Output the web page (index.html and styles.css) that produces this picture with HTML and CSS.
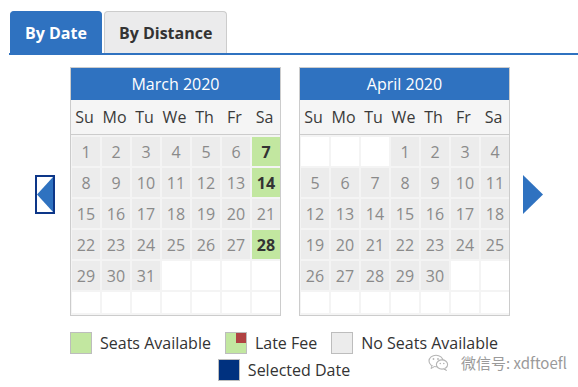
FILE: index.html
```html
<!DOCTYPE html>
<html lang="en">
<head>
    <meta charset="UTF-8">
    <meta name="viewport" content="width=device-width, initial-scale=1.0">
    <title>Test Dates</title>
    <link rel="stylesheet" href="styles.css">
</head>
<body>
    <!-- Tabs -->
    <div class="tabs">
        <div class="tab active">By Date</div>
        <div class="tab">By Distance</div>
    </div>

    <!-- Calendars -->
    <div class="cal-row">
        <div class="arrow prev">
            <svg width="20" height="39" viewBox="0 0 20 39">
                <rect x="1" y="1" width="18" height="37" fill="#fff" stroke="#0d3688" stroke-width="2"/>
                <polygon points="2,19.5 18,2 18,37" fill="#2f72c0"/>
            </svg>
        </div>

        <div class="cal">
            <div class="cal-head">March 2020</div>
            <div class="cal-dow">
                <span>Su</span><span>Mo</span><span>Tu</span><span>We</span><span>Th</span><span>Fr</span><span>Sa</span>
            </div>
            <div class="cal-grid">
                <span class="day">1</span><span class="day">2</span><span class="day">3</span><span class="day">4</span><span class="day">5</span><span class="day">6</span><span class="day open">7</span>
                <span class="day">8</span><span class="day">9</span><span class="day">10</span><span class="day">11</span><span class="day">12</span><span class="day">13</span><span class="day open">14</span>
                <span class="day">15</span><span class="day">16</span><span class="day">17</span><span class="day">18</span><span class="day">19</span><span class="day">20</span><span class="day">21</span>
                <span class="day">22</span><span class="day">23</span><span class="day">24</span><span class="day">25</span><span class="day">26</span><span class="day">27</span><span class="day open">28</span>
                <span class="day">29</span><span class="day">30</span><span class="day">31</span><span class="empty"></span><span class="empty"></span><span class="empty"></span><span class="empty"></span>
                <span class="empty"></span><span class="empty"></span><span class="empty"></span><span class="empty"></span><span class="empty"></span><span class="empty"></span><span class="empty"></span>
            </div>
        </div>

        <div class="cal">
            <div class="cal-head">April 2020</div>
            <div class="cal-dow">
                <span>Su</span><span>Mo</span><span>Tu</span><span>We</span><span>Th</span><span>Fr</span><span>Sa</span>
            </div>
            <div class="cal-grid">
                <span class="empty"></span><span class="empty"></span><span class="empty"></span><span class="day">1</span><span class="day">2</span><span class="day">3</span><span class="day">4</span>
                <span class="day">5</span><span class="day">6</span><span class="day">7</span><span class="day">8</span><span class="day">9</span><span class="day">10</span><span class="day">11</span>
                <span class="day">12</span><span class="day">13</span><span class="day">14</span><span class="day">15</span><span class="day">16</span><span class="day">17</span><span class="day">18</span>
                <span class="day">19</span><span class="day">20</span><span class="day">21</span><span class="day">22</span><span class="day">23</span><span class="day">24</span><span class="day">25</span>
                <span class="day">26</span><span class="day">27</span><span class="day">28</span><span class="day">29</span><span class="day">30</span><span class="empty"></span><span class="empty"></span>
                <span class="empty"></span><span class="empty"></span><span class="empty"></span><span class="empty"></span><span class="empty"></span><span class="empty"></span><span class="empty"></span>
            </div>
        </div>

        <div class="arrow next">
            <svg width="20" height="39" viewBox="0 0 20 39">
                <polygon points="0,0 20,19.5 0,39" fill="#2f72c0"/>
            </svg>
        </div>
    </div>

    <!-- Legend -->
    <div class="legend">
        <div class="legend-item"><span class="swatch green"></span>Seats Available</div>
        <div class="legend-item"><span class="swatch late"></span>Late Fee</div>
        <div class="legend-item"><span class="swatch gray"></span>No Seats Available</div>
        <div class="legend-item"><span class="swatch navy"></span>Selected Date</div>
    </div>

    <!-- Watermark -->
    <div class="watermark">
        <svg width="21" height="17" viewBox="0 0 21 17">
            <ellipse cx="8" cy="7" rx="7" ry="5.8" fill="none" stroke="#b5b5b5" stroke-width="1.1"/>
            <path d="M4 11.8 L3 14.5 L6.5 12.6" fill="#fff" stroke="#b5b5b5" stroke-width="1"/>
            <ellipse cx="14" cy="10.5" rx="5.6" ry="4.6" fill="#fff" stroke="#b5b5b5" stroke-width="1.1"/>
            <path d="M17 14.6 L18.5 16.5 L15.5 15" fill="#fff" stroke="#b5b5b5" stroke-width="1"/>
            <circle cx="5.5" cy="5" r="0.9" fill="#b5b5b5"/>
            <circle cx="10" cy="5" r="0.9" fill="#b5b5b5"/>
            <circle cx="12.3" cy="9.5" r="0.8" fill="#b5b5b5"/>
            <circle cx="15.8" cy="9.5" r="0.8" fill="#b5b5b5"/>
        </svg>
        <span>微信号: xdftoefl</span>
    </div>
</body>
</html>
```

FILE: styles.css
```css
body {
    font-family: 'Open Sans', 'Liberation Sans', sans-serif;
    margin: 0;
    background-color: #fff;
    color: #333;
    font-size: 16px;
}

/* Tabs */
.tabs {
    display: flex;
    gap: 2px;
    margin: 11px 0 0 9px;
    padding-left: 1px;
    border-bottom: 2px solid #2f72c0;
}

.tab {
    height: 42px;
    box-sizing: border-box;
    padding: 0 14px;
    display: flex;
    align-items: center;
    font-weight: bold;
    color: #333;
    background-color: #ebebec;
    border: 1px solid #cccccc;
    border-bottom: none;
    border-radius: 4px 4px 0 0;
}

.tab.active {
    background-color: #2f72c0;
    border-color: #2f72c0;
    color: #fff;
}

/* Calendar row */
.cal-row {
    display: flex;
    justify-content: center;
    align-items: center;
    margin-top: 12px;
}

.arrow {
    width: 20px;
    height: 39px;
    margin-top: 6px;
}

.arrow svg {
    display: block;
}

.prev {
    margin-right: 15px;
}

.next {
    margin-left: 13px;
}

.cal + .cal {
    margin-left: 18px;
}

.cal {
    width: 211px;
    box-sizing: border-box;
    border: 1px solid #cccccc;
}

.cal-head {
    height: 32px;
    background-color: #2f72c0;
    color: #fff;
    display: flex;
    align-items: center;
    justify-content: center;
}

.cal-dow {
    height: 34px;
    display: grid;
    grid-template-columns: repeat(7, 28px);
    column-gap: 2px;
    padding: 0 1px;
    align-items: center;
    background-color: #f5f5f5;
    border-bottom: 1px solid #cccccc;
    color: #3a3a3a;
}

.cal-dow span {
    text-align: center;
    margin-left: -3px;
}

.cal-grid {
    display: grid;
    grid-template-columns: repeat(7, 28px);
    grid-template-rows: repeat(5, 29px) 21px;
    gap: 2px;
    padding: 2px 1px 2px 1px;
    background-color: #f4f4f4;
}

.empty {
    background-color: #fff;
}

.day {
    display: flex;
    align-items: center;
    justify-content: center;
    background-color: #ececec;
    color: #8a8a8a;
}

.day.open {
    background-color: #c2e7a0;
    color: #333;
    font-weight: bold;
}

/* Legend */
.legend {
    width: 470px;
    box-sizing: border-box;
    padding-right: 10px;
    margin: 16px auto 0 auto;
    display: flex;
    flex-wrap: wrap;
    justify-content: center;
    column-gap: 14px;
    row-gap: 5px;
}

.legend-item {
    display: flex;
    align-items: center;
    height: 22px;
    color: #333;
}

.swatch {
    width: 22px;
    height: 22px;
    box-sizing: border-box;
    border: 1px solid #bdbdbd;
    margin-right: 8px;
    position: relative;
}

.swatch.green {
    background-color: #c2e7a0;
}

.swatch.late {
    background-color: #c2e7a0;
}

.swatch.late::after {
    content: "";
    position: absolute;
    top: 0;
    right: 0;
    width: 10px;
    height: 10px;
    background-color: #b04242;
}

.swatch.gray {
    background-color: #ececec;
}

.swatch.navy {
    background-color: #00317f;
}

/* Watermark */
.watermark {
    position: absolute;
    left: 428px;
    top: 352px;
    display: flex;
    align-items: center;
    gap: 12px;
    font-family: 'Noto Sans CJK SC', sans-serif;
    font-size: 15px;
    color: #9a9a9a;
    text-shadow: 0 0 2px #fff, 0 0 2px #fff;
}
```
